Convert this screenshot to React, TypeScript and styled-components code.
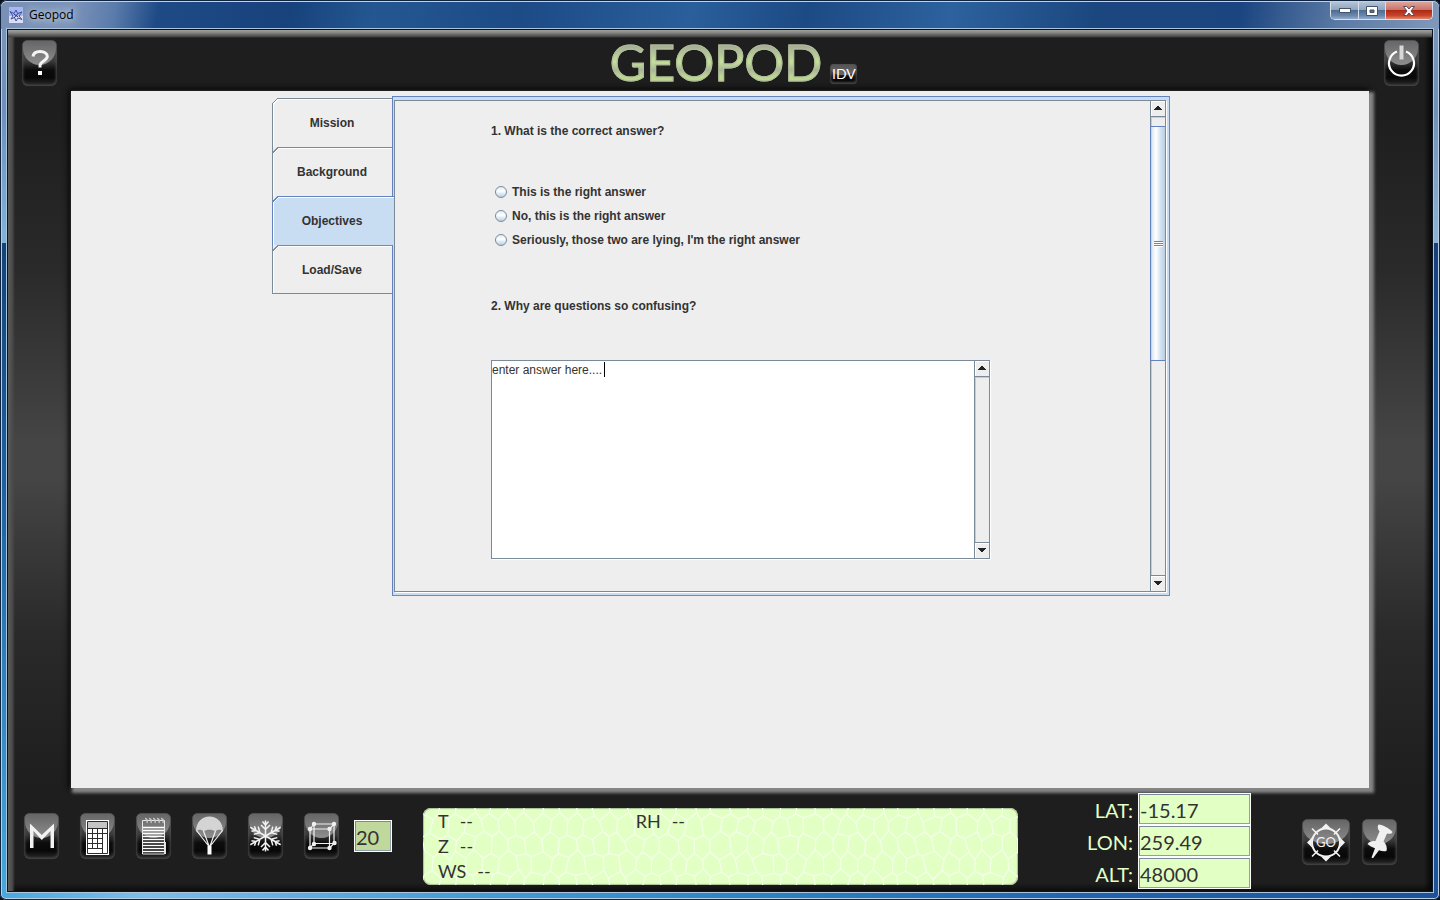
import React from "react";
import styled, { createGlobalStyle, css } from "styled-components";

const ui = `"Liberation Sans", Arial, sans-serif`;
const deco = `Lato, "Open Sans", sans-serif`;
const line = "#7a8a99";
const blueLine = "#6382bf";
const selected = "#c8ddf2";
const lcd = "#e2ffc4";

const GlobalStyle = createGlobalStyle`
  *, *::before, *::after { box-sizing: border-box; }
  body { margin: 0; background: #05101f; }
  button { padding: 0; border: 0; font: inherit; color: inherit; cursor: pointer; }
`;

const WindowFrame = styled.div`
  min-height: 100vh;
  display: flex;
  flex-direction: column;
  padding: 0 7px 8px;
  border-radius: 7px 7px 6px 6px;
  box-shadow: inset 0 0 0 1px #10233f, inset 0 0 0 2px #b9cde3;
  background:
    linear-gradient(90deg, #46a9dc 0, #7dbde8 10%, #4a9fd6 30%, #2f86c4 50%, #2264ac 75%, #1d5299 100%) bottom / 100% 8px no-repeat,
    linear-gradient(180deg, #7d96ba 0, #6f8fb6 12%, #7fb4d4 27%, #134478 27%, #1f62a0 55%, #46a9dc 100%) left / 50% 100% no-repeat,
    linear-gradient(180deg, #7d96ba 0, #6f8fb6 12%, #8fb2d2 27%, #17407a 27%, #1f62a8 60%, #1d5299 100%) right / 50% 100% no-repeat;
`;

const TitleBar = styled.header`
  height: 28px;
  margin: 1px -6px 0;
  padding: 0 6px 0 8px;
  display: flex;
  align-items: flex-start;
  border-top: 1px solid #c3d1e2;
  border-radius: 6px 6px 0 0;
  background: linear-gradient(100deg, #7890b5 0, #7c94b9 5%, #5a7bab 8%, #1e4a86 11%, #17427c 20%, #245791 26%, #1c4b86 36%, #2a5f9b 48%, #1c4a84 56%, #2d629e 66%, #1b477f 76%, #1b4580 86%, #5b7aa5 93%, #8098ba 100%);
`;

const Title = styled.h1`
  flex: 1;
  margin: 0;
  display: flex;
  align-items: center;
  gap: 6px;
  height: 26px;
  font: 400 12px/16px "Open Sans", "Noto Sans", sans-serif;
  color: #000;
  span { text-shadow: 0 0 6px #cfdbea, 0 0 10px #cfdbea; }
`;

const Controls = styled.div`
  display: flex;
  height: 18px;
  border: 1px solid #d5e0ec;
  border-top: 0;
  border-radius: 0 0 5px 5px;
  overflow: hidden;
`;

const ControlButton = styled.button<{ $close?: boolean }>`
  width: ${(p) => (p.$close ? 47 : 27)}px;
  display: grid;
  place-items: center;
  & + & { border-left: 1px solid #d5e0ec; }
  background: ${(p) =>
    p.$close
      ? "linear-gradient(#dba59b 0, #cc7468 45%, #ae2a18 50%, #c8452c 80%, #e08a68 100%)"
      : "linear-gradient(#b4c3d6 0, #8fa5c0 45%, #4f6c93 50%, #6a87ad 80%, #93accb 100%)"};
`;

const Cockpit = styled.main`
  flex: 1;
  display: flex;
  flex-direction: column;
  border: 1px solid #0a1420;
  outline: 1px solid #a9c4dc;
  padding: 0;
  background: #1e1e1e;
`;

const Hull = styled.div`
  flex: 1;
  display: flex;
  flex-direction: column;
  background:
    linear-gradient(#a0a19d, #8a8b88 30%, #4a4a4a 80%, transparent) top / 100% 8px no-repeat,
    linear-gradient(90deg, #5a5c59, #4a4a4a 60%, transparent) left / 7px 100% no-repeat,
    linear-gradient(270deg, #060606, transparent) right / 8px 100% no-repeat,
    linear-gradient(0deg, #0c0c0c, transparent) bottom / 100% 8px no-repeat,
    linear-gradient(#1e1e1e 0, #1e1e1e 10%, #2a2a2a 28%, #454545 48%, #454545 52%, #2a2a2a 70%, #1e1e1e 88%, #1e1e1e 100%);
`;

const TopBar = styled.div`
  height: 61px;
  padding: 10px 13px 0 14px;
  display: grid;
  grid-template-columns: 1fr auto 1fr;
  align-items: start;
  & > :last-child { justify-self: end; }
`;

const Brand = styled.div`
  display: flex;
  align-items: flex-end;
  gap: 8px;
  height: 44px;
  margin-left: 26px;
`;

const Wordmark = styled.div`
  height: 50px;
  padding-top: 3px;
  font: 400 50px/50px ${deco};
  color: transparent;
  -webkit-text-stroke: 1px #b0bd98;
  background: linear-gradient(#a5ae95 12px, #bcd39a 24px, #c4df9c 28px, #a9b598 36px, #bcd694 42px);
  background-clip: text;
  -webkit-background-clip: text;
`;

const glass = css`
  position: relative;
  overflow: hidden;
  background: linear-gradient(#5c5c5c 0, #3c3c3c 45%, #0c0c0c 65%, #080808 82%, #2c2c2c 100%);
  box-shadow: inset 0 0 3px 1px #4c4c4c, 0 0 1px #3a3a3a;
  &::before {
    content: "";
    position: absolute;
    inset: 1px 1px 46%;
    border-radius: 4px 4px 50% 50% / 4px 4px 70% 70%;
    background: linear-gradient(#666, #8e8e8e);
  }
`;

const IconButton = styled.button<{ $wide?: boolean }>`
  ${glass}
  flex: none;
  width: ${(p) => (p.$wide ? 48 : 35)}px;
  height: 46px;
  border-radius: 6px;
  svg { position: relative; display: block; margin: 0 auto; }
`;

const IdvButton = styled.button`
  ${glass}
  width: 27px;
  height: 20px;
  border-radius: 4px;
  font: 400 14px/20px ${deco};
  color: #fff;
  &::before { background: linear-gradient(#555, #6a6a6a); }
  span { position: relative; }
`;

const Screen = styled.section`
  flex: 1;
  margin: 0 63px;
  padding: 5px 24px 24px 26px;
  display: flex;
  justify-content: center;
  align-items: flex-start;
  background: #eee;
  box-shadow: 3px 3px 3px 2px #858585, 0 -2px 6px #080808, -2px 0 5px #080808;
`;

const Tabs = styled.nav`
  width: 121px;
  margin: 2px -1px 0 0;
  display: flex;
  flex-direction: column;
  border-bottom: 1px solid ${line};
  position: relative;
`;

const Tab = styled.button<{ $on?: boolean }>`
  position: relative;
  height: 49px;
  padding-right: ${(p) => (p.$on ? 3 : 1)}px;
  font: 700 12px/16px ${ui};
  color: #333;
  background: ${(p) => (p.$on ? selected : "#eee")};
  border: solid ${(p) => (p.$on ? blueLine : line)};
  border-width: 1px 0 0 1px;
  box-shadow: inset 1px 1px 0 #fff;
  margin-right: ${(p) => (p.$on ? -1 : 1)}px;
  z-index: ${(p) => (p.$on ? 1 : 0)};
  &::before {
    content: "";
    position: absolute;
    left: -1px;
    top: -1px;
    width: 6px;
    height: 6px;
    border-left: 1px solid ${line};
    background: linear-gradient(135deg, #eee 42%, ${(p) => (p.$on ? blueLine : line)} 42% 56%, #fff 56% 70%, transparent 70%);
  }
  &:first-child::before { border-left: 0; }
  &:last-child { height: 48px; }
`;

const Sheet = styled.div`
  flex: 0 1 778px;
  min-width: 0;
  display: flex;
  height: 500px;
  border: 1px solid ${blueLine};
  border-right-color: ${line};
  border-bottom-color: ${line};
  background: ${selected};
  padding: 3px 3px 3px 1px;
`;

const Viewport = styled.div`
  flex: 1;
  min-width: 0;
  display: flex;
  background: #eee;
  border: 1px solid ${line};
  border-right: 0;
  box-shadow: 1px 1px 0 #fff;
`;

const Form = styled.form`
  flex: 1;
  min-width: 0;
  padding: 22px 96px 0;
  font: 700 12px/16px ${ui};
  color: #333;
`;

const Question = styled.fieldset`
  margin: 0;
  padding: 0;
  border: 0;
  min-width: 0;
`;

const Prompt = styled.legend`
  padding: 0;
  margin: 0 0 41px;
`;

const Choices = styled.div`
  display: flex;
  flex-direction: column;
  align-items: flex-start;
  margin: 0 0 46px 4px;
`;

const Choice = styled.label`
  display: flex;
  align-items: center;
  gap: 5px;
  height: 24px;
`;

const Radio = styled.input`
  appearance: none;
  width: 12px;
  height: 12px;
  margin: 0;
  border: 1px solid ${line};
  border-radius: 50%;
  background: linear-gradient(#dfeaf5, #fff 40%, #b8cfe5);
  &:checked { background: radial-gradient(#333 35%, #dfeaf5 40%); }
`;

const AnswerLabel = styled.label`
  display: block;
  margin-bottom: 46px;
`;

const AnswerBox = styled.div`
  position: relative;
  display: flex;
  max-width: 499px;
  height: 199px;
  border: 1px solid ${line};
  border-right: 0;
  box-shadow: 1px 1px 0 #fff;
  background: #fff;
`;

const Answer = styled.textarea`
  flex: 1;
  min-width: 0;
  resize: none;
  border: 0;
  outline: 0;
  padding: 1px 0;
  font: 400 12px/16px ${ui};
  color: #333;
  background: transparent;
  overflow: hidden;
`;

const Caret = styled.span`
  position: absolute;
  left: 112px;
  top: 1px;
  width: 1px;
  height: 15px;
  background: #000;
`;

const Bar = styled.div`
  flex: none;
  width: 16px;
  display: flex;
  flex-direction: column;
  border: solid ${line};
  border-width: 0 1px;
  background: #eee;
`;

const Arrow = styled.button`
  flex: none;
  height: 16px;
  padding-right: 1px;
  display: grid;
  place-items: center;
  background: #eee;
  box-shadow: inset 1px 1px 0 #fff;
  &:first-child { border-bottom: 1px solid ${line}; }
  &:last-child { border-top: 1px solid ${line}; }
`;

const Track = styled.div`
  flex: 1;
  display: flex;
  flex-direction: column;
  box-shadow: inset 1px 1px 0 #b8cfe5;
`;

const Thumb = styled.div`
  height: 235px;
  margin: 9px 0 0 -1px;
  display: grid;
  place-items: center;
  border: 1px solid ${blueLine};
  border-right: 0;
  background: linear-gradient(90deg, #c3d6ea 0 1px, #dce8f4 1px, #fff 5px, #d7e5f1 9px, #b8cfe5);
`;

const Grip = styled.div`
  width: 9px;
  height: 6px;
  background: repeating-linear-gradient(${blueLine} 0 1px, #fff 1px 2px);
`;

const Console = styled.footer`
  display: flex;
  align-items: flex-start;
  padding: 5px 35px 2px 16px;
`;

const Tools = styled.div`
  display: flex;
  gap: 21px;
  margin-top: 20px;
`;

const sunken = css`
  border: 1px solid #fff;
  outline: 0;
  border-radius: 0;
  box-shadow: inset 1px 1px 0 ${line}, inset -1px -1px 0 #8fa0a8;
  font: 400 20px/24px ${deco};
  color: #333;
`;

const SpeedInput = styled.input`
  ${sunken}
  width: 38px;
  height: 32px;
  margin: 27px 31px 0 15px;
  padding: 1px 0 0 1px;
  background: #c0d89c;
`;

const Display = styled.div`
  position: relative;
  flex: 1;
  min-width: 0;
  height: 77px;
  margin-top: 15px;
  padding: 1px 15px;
  border-radius: 8px;
  background: ${lcd};
  overflow: hidden;
  color: #333;
  font: 400 18px/25px ${deco};
  box-shadow: inset 0 0 1px 1px #a8bd95;
  dl { position: relative; margin: 0; display: grid; grid-template-columns: 1fr 2fr; grid-auto-rows: 25px; column-gap: 14px; }
`;

const Cells = styled.svg`
  position: absolute;
  inset: 0;
  width: 100%;
  height: 100%;
`;

const Reading = styled.div<{ $first?: boolean }>`
  grid-column: ${(p) => (p.$first ? 1 : 2)};
  display: flex;
  gap: 11px;
  dt, dd { margin: 0; }
`;

const Coordinates = styled.div`
  display: grid;
  grid-template-columns: 46px 113px;
  grid-auto-rows: 32px;
  column-gap: 5px;
  margin: 0 51px 0 69px;
  label { font: 400 20px/34px ${deco}; color: ${lcd}; text-align: right; }
`;

const CoordInput = styled.input`
  ${sunken}
  width: 113px;
  height: 32px;
  padding: 2px 0 0 1px;
  background: ${lcd};
`;

const Actions = styled.div`
  display: flex;
  gap: 12px;
  margin-top: 26px;
`;

const TILE_W = 612;
const TILE_H = 76;

function cellPath() {
  const cols = 36;
  const rows = 4;
  const w = TILE_W / cols;
  const h = TILE_H / rows;
  const jitter = (a: number, b: number) => {
    const s = Math.sin(a * 127.1 + b * 311.7) * 43758.5453;
    return (s - Math.floor(s) - 0.5) * 5;
  };
  const vertex = (r: number, k: number) => {
    const rr = ((r % rows) + rows) % rows;
    const kk = ((k % (cols * 2)) + cols * 2) % (cols * 2);
    // Odd vertices join the edge below, so they hang lower than their neighbours.
    const drop = (k + r) % 2 === 0 ? -3 : 3;
    return `${((k * w) / 2 + jitter(rr, kk)).toFixed(1)} ${(r * h + 9 + drop + jitter(kk, rr + 9)).toFixed(1)}`;
  };
  let d = "";
  for (let r = -1; r <= rows; r++) {
    d += `M${vertex(r, 0)}`;
    for (let k = 1; k <= cols * 2; k++) d += `L${vertex(r, k)}`;
    for (let k = 0; k <= cols * 2; k++) if ((k + r) % 2 !== 0) d += `M${vertex(r, k)}L${vertex(r + 1, k)}`;
  }
  return d;
}

const cells = cellPath();

const HelpIcon = () => (
  <svg width="35" height="46" viewBox="0 0 35 46" fill="none" stroke="#f4f4f4" strokeWidth="3">
    <path d="M11 16.500C11.500 12.800 14.500 11.500 18 11.500c4.500 0 7.300 2 7.300 5 0 4-7.300 4.800-7.300 9v2" />
    <path d="M16 33h4" strokeWidth="4" stroke="#fff" />
  </svg>
);

const PowerIcon = () => (
  <svg width="35" height="46" viewBox="0 0 35 46" fill="none" stroke="#fff">
    <path d="M13 11.500a12.500 12.500 0 1 0 9 0" strokeWidth="2.200" />
    <path d="M17.500 5.500v14" stroke="#d8d8d8" strokeWidth="4" />
  </svg>
);

const MIcon = () => (
  <svg width="35" height="46" viewBox="0 0 35 46" fill="#f2f2f2">
    <path d="M6 35V10.500L17.800 22 30 10.500V35h-3.500V18l-8.700 9L9.500 18v17z" />
  </svg>
);

const CalculatorIcon = () => (
  <svg width="35" height="46" viewBox="0 0 35 46">
    <path d="M6 7h23v35H6z" fill="#fff" />
    <path d="M8 9h19v6H8z" fill="#c4c4c4" />
    <path d="M7.500 15.500h20M7.500 20.500h20M7.500 25.500h15M7.500 30.500h15M7.500 35.500h15M12.500 15v20M17.500 15v20M22.500 15v26M7.500 8.500v32h20v-32z" stroke="#2c2c2c" fill="none" />
  </svg>
);

const NotepadIcon = () => (
  <svg width="35" height="46" viewBox="0 0 35 46" fill="none">
    <path d="M6.500 7.500h22v33.500h-22z" stroke="#e8e8e8" />
    <path d="M7 14.500h21M7 17.500h21M7 20.500h21M7 23.500h21M7 26.500h21M7 29.500h21M7 32.500h21M7 35.500h21M7 38.500h21" stroke="#fff" strokeWidth="1.400" />
    <path d="M29.500 29v12" stroke="#ddd" />
    <path d="M9 5.500q3 0 2 4.500M13 5.500q3 0 2 4.500M17 5.500q3 0 2 4.500M21 5.500q3 0 2 4.500M25 5.500q3 0 2 4.500" stroke="#c8c8c8" strokeWidth="1.400" />
  </svg>
);

const ParachuteIcon = () => (
  <svg width="35" height="46" viewBox="0 0 35 46" fill="none" stroke="#eee" strokeWidth="1.200">
    <path d="M4 18.500C4 9 10 3.500 17.500 3.500S31 9 31 18.500c-2.500-2.500-5.500-2.500-7.500 0-3-2.500-9-2.500-12 0-2-2.500-5-2.500-7.500 0z" fill="#d4d4d4" stroke="none" />
    <path d="M4.500 17.500L17 33.500M30.500 17.500L18 33.500M11.500 18l5.500 15M23.500 18L18 33" />
    <path d="M15.500 33h4v8.500h-4z" fill="#fff" stroke="none" />
  </svg>
);

const SnowflakeIcon = () => (
  <svg width="35" height="46" viewBox="0 0 35 46" fill="none" stroke="#f2f2f2" strokeWidth="1.500">
    {[0, 60, 120, 180, 240, 300].map((a) => (
      <path key={a} transform={`rotate(${a} 17.500 23)`} d={`M17.500 23V${a % 180 ? 5.5 : 7.5}M14.500 8.500l3 3.500 3-3.500M13 12l4.500 4.500L22 12`} />
    ))}
  </svg>
);

const CubeIcon = () => (
  <svg width="35" height="46" viewBox="0 0 35 46" fill="none" stroke="#f0f0f0" strokeWidth="1.200">
    <path d="M6 16h19.500v19H6zM10 11h20v19.500H10zM6 16l4-5M25.500 16l4.500-5M6 35l4-4.500M25.500 35l4.500-4.500" />
    <g fill="#f0f0f0" stroke="none">
      {[[6, 16], [25.5, 16], [6, 35], [25.5, 35], [10, 11], [30, 11], [10, 31], [30.5, 30]].map(([x, y]) => (
        <circle key={`${x}-${y}`} cx={x} cy={y} r="2.200" />
      ))}
    </g>
  </svg>
);

const GoIcon = () => (
  <svg width="48" height="46" viewBox="0 0 48 46" fill="none" stroke="#f2f2f2">
    <circle cx="24" cy="23.500" r="14" strokeWidth="2" />
    <path d="M24 4.500l5.500 5.500q-5.500-2-11 0zM24 42.500l5.500-5.500q-5.500 2-11 0zM5 23.500l5.500-5.500q-2 5.500 0 11zM43 23.500L37.500 18q2 5.500 0 11z" fill="#f2f2f2" stroke="none" />
    <path d="M10 9.500l6 6M38 9.500l-6 6M10 37.500l6-6M38 37.500l-6-6" strokeWidth="1.600" />
    <text x="24" y="28" textAnchor="middle" fontFamily="Lato, sans-serif" fontSize="13" fill="#f2f2f2" stroke="none">GO</text>
  </svg>
);

const PinIcon = () => (
  <svg width="35" height="46" viewBox="0 0 35 46" fill="#f0f0f0">
    <path d="M16.500 5.500C21 6 27 9 30.500 13c-.5 2-3 2.200-5.500 1.500l-3.500 8c2.800 2.500 4 6 3 9.500-2.500.5-5 .2-7.500-.8l-6 8-1.500-.7 3.500-9.200C9.500 28 7 26.500 5.500 25c1.500-2.500 4.500-3.500 8-3l4-9.500c-1.800-2-2.500-5-1-7z" />
  </svg>
);

const AppIcon = () => (
  <svg width="14" height="16" viewBox="0 0 14 16">
    <path d="M0 0h14v16H0z" fill="#aab6ee" />
    <path d="M0 9h14v7H0z" fill="#dcdcf2" />
    <path d="M1 4.500l4 2L7 3l1.500 3.500L13 5l-3 4 3 3.500-4-1.500-2 3-1.500-3.500L2 12l2-3z" fill="none" stroke="#3b4fa5" />
    <path d="M5 7l4 3M9 6.500L5 11" stroke="#27337c" />
  </svg>
);

const TriangleIcon = ({ down }: { down?: boolean }) => (
  <svg width="9" height="5" viewBox="0 0 9 5" shapeRendering="crispEdges">
    <path d={down ? "M0 0h9L5 4H4z" : "M0 4h9L5 0H4z"} fill="#222" />
  </svg>
);

const Scroll = ({ children }: { children?: React.ReactNode }) => (
  <Bar>
    <Arrow type="button" aria-label="Scroll up"><TriangleIcon /></Arrow>
    <Track>{children}</Track>
    <Arrow type="button" aria-label="Scroll down"><TriangleIcon down /></Arrow>
  </Bar>
);

const tabNames = ["Mission", "Background", "Objectives", "Load/Save"];
const choices = ["This is the right answer", "No, this is the right answer", "Seriously, those two are lying, I'm the right answer"];
const tools = [
  { name: "Mission", Icon: MIcon },
  { name: "Calculator", Icon: CalculatorIcon },
  { name: "Notepad", Icon: NotepadIcon },
  { name: "Dropsonde", Icon: ParachuteIcon },
  { name: "Particle imager", Icon: SnowflakeIcon },
  { name: "Grid points", Icon: CubeIcon },
];
const readings = [
  { name: "T", first: true },
  { name: "RH", first: false },
  { name: "Z", first: true },
  { name: "WS", first: true },
];
const coordinates = [
  { name: "LAT", value: "-15.17" },
  { name: "LON", value: "259.49" },
  { name: "ALT", value: "48000" },
];

export default function App() {
  return (
    <WindowFrame>
      <GlobalStyle />
      <TitleBar>
        <Title><AppIcon /><span>Geopod</span></Title>
        <Controls>
          <ControlButton aria-label="Minimize">
            <svg width="12" height="5"><rect x=".5" y=".5" width="11" height="4" fill="#fff" stroke="#45536b" /></svg>
          </ControlButton>
          <ControlButton aria-label="Maximize">
            <svg width="12" height="10"><path d="M.5.5h11v9H.5zM4 4v2.500h4V4z" fill="#fff" fillRule="evenodd" stroke="#45536b" /></svg>
          </ControlButton>
          <ControlButton $close aria-label="Close">
            <svg width="12" height="10"><path d="M.5.5h3.300L6 3 8.200.5h3.300L8 5l3.500 4.500H8.200L6 7 3.800 9.500H.5L4 5z" fill="#fff" stroke="#5a4a5c" /></svg>
          </ControlButton>
        </Controls>
      </TitleBar>
      <Cockpit>
        <Hull>
          <TopBar>
            <IconButton aria-label="Help"><HelpIcon /></IconButton>
            <Brand>
              <Wordmark>GEOPOD</Wordmark>
              <IdvButton><span>IDV</span></IdvButton>
            </Brand>
            <IconButton aria-label="Power"><PowerIcon /></IconButton>
          </TopBar>
          <Screen>
            <Tabs>
              {tabNames.map((name) => (
                <Tab key={name} $on={name === "Objectives"}>{name}</Tab>
              ))}
            </Tabs>
            <Sheet>
              <Viewport>
                <Form>
                  <Question>
                    <Prompt>1. What is the correct answer?</Prompt>
                    <Choices>
                      {choices.map((text) => (
                        <Choice key={text}><Radio type="radio" name="correct" />{text}</Choice>
                      ))}
                    </Choices>
                  </Question>
                  <AnswerLabel htmlFor="answer">2. Why are questions so confusing?</AnswerLabel>
                  <AnswerBox>
                    <Answer id="answer" defaultValue="enter answer here...." />
                    <Caret />
                    <Scroll />
                  </AnswerBox>
                </Form>
                <Scroll><Thumb><Grip /></Thumb></Scroll>
              </Viewport>
            </Sheet>
          </Screen>
          <Console>
            <Tools>
              {tools.map(({ name, Icon }) => (
                <IconButton key={name} aria-label={name}><Icon /></IconButton>
              ))}
            </Tools>
            <SpeedInput aria-label="Speed" defaultValue="20" />
            <Display>
              <Cells aria-hidden="true">
                <defs>
                  <pattern id="cells" width={TILE_W} height={TILE_H} patternUnits="userSpaceOnUse">
                    <path d={cells} fill="none" stroke="#f4ffea" strokeWidth="1.300" />
                  </pattern>
                </defs>
                <rect width="100%" height="100%" fill="url(#cells)" />
              </Cells>
              <dl>
                {readings.map(({ name, first }) => (
                  <Reading key={name} $first={first}><dt>{name}</dt><dd>--</dd></Reading>
                ))}
              </dl>
            </Display>
            <Coordinates>
              {coordinates.map(({ name, value }) => (
                <React.Fragment key={name}>
                  <label htmlFor={name}>{name}:</label>
                  <CoordInput id={name} defaultValue={value} />
                </React.Fragment>
              ))}
            </Coordinates>
            <Actions>
              <IconButton $wide aria-label="Go"><GoIcon /></IconButton>
              <IconButton aria-label="Pin location"><PinIcon /></IconButton>
            </Actions>
          </Console>
        </Hull>
      </Cockpit>
    </WindowFrame>
  );
}
